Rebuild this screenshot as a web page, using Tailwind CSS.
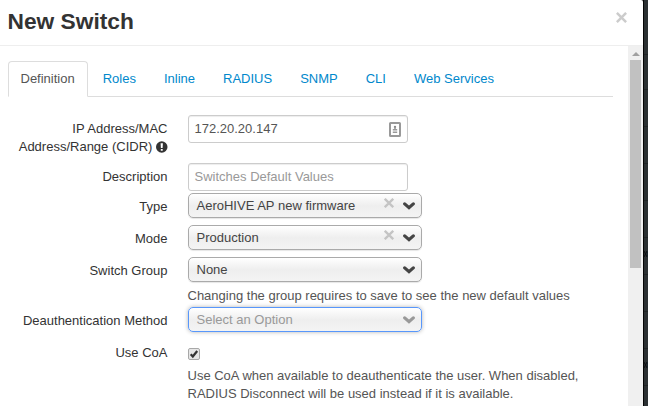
<!DOCTYPE html>
<html lang="en">
<head>
<meta charset="utf-8">
<title>New Switch</title>
<script src="https://cdn.jsdelivr.net/npm/@tailwindcss/browser@4"></script>
</head>
<body class="w-[648px] h-[406px] overflow-hidden flex bg-[#2b3032] font-['Liberation_Sans',Arial,sans-serif] text-[13px] leading-[18px] text-[#333]">
<svg width="0" height="0" class="absolute">
  <symbol id="chev" viewBox="0 0 12 8"><path d="M1.700 1.900 6 5.700l4.300-3.800" fill="none" stroke="currentColor" stroke-width="3.200" stroke-linecap="round"/></symbol>
  <symbol id="cross" viewBox="0 0 10 10"><path d="M.8.8l8.400 8.400M9.200.8.800 9.200" fill="none" stroke="currentColor" stroke-width="2.300"/></symbol>
</svg>
<main class="w-[643px] h-full shrink-0 bg-white rounded-tr-[2px] flex flex-col">
  <header class="h-[46px] shrink-0 border-b border-[#eee] flex justify-between pl-[7.500px] pr-[16px]">
    <h1 class="text-[22.75px] leading-[43px] font-bold">New Switch</h1>
    <svg class="w-[11px] h-[11px] mt-3 text-[#ccc]"><use href="#cross"/></svg>
  </header>
  <div class="flex flex-1 min-h-0">
    <div class="flex-1 pl-[7.500px] pt-[15px] pr-[15px]">
      <nav class="flex gap-[2px] h-9 border-b border-[#ddd] text-[#0088cc] mb-[18px]">
        <a class="h-9 px-3 pt-2 border border-b-white border-[#ddd] rounded-t-[4px] bg-white text-[#555]">Definition</a>
        <a class="px-[13px] pt-[9px]">Roles</a>
        <a class="px-[13px] pt-[9px]">Inline</a>
        <a class="px-[13px] pt-[9px]">RADIUS</a>
        <a class="px-[13px] pt-[9px]">SNMP</a>
        <a class="px-[13px] pt-[9px]">CLI</a>
        <a class="px-[13px] pt-[9px]">Web Services</a>
      </nav>
      <form>
        <div class="h-12 flex gap-5">
          <label class="w-40 pt-[5px] text-right">IP Address/MAC<br>Address/Range (CIDR) <svg class="inline-block align-[-2px] w-[11.500px] h-3" viewBox="0 0 12 12"><circle cx="6" cy="6" r="6" fill="#333"/><path d="M4.800 2h2.400L6.900 7H5.100zM5 8h2v1.900H5z" fill="#fff"/></svg></label>
          <div class="w-[220px] h-7 border border-[#ccc] rounded-[3px] flex items-center justify-between pl-[6px] pr-[6px] text-[#555] shadow-[inset_0_1px_1px_rgba(0,0,0,0.075)]">172.20.20.147
            <svg width="12" height="15" viewBox="0 0 12 15"><rect x="1" y="1" width="10" height="13" rx=".5" fill="#fff" stroke="#999" stroke-width="2"/><circle cx="6" cy="5" r="1.200" fill="#888"/><path d="M5.200 5h1.600v2h1.400v1.500H3.800V7h1.400zM3.800 9.500h4.400v1.500H3.800z" fill="#999"/></svg>
          </div>
        </div>
        <div class="h-[30px] flex gap-5">
          <label class="w-40 pt-[5px] text-right">Description</label>
          <div class="w-[220px] h-7 border border-[#ccc] rounded-[3px] flex items-center pl-[6px] text-[#999] shadow-[inset_0_1px_1px_rgba(0,0,0,0.075)]">Switches Default Values</div>
        </div>
        <div class="h-8 flex gap-5">
          <label class="w-40 pt-[5px] text-right">Type</label>
          <div class="w-[234px] h-[25px] border border-[#aaa] rounded-[5px] flex pl-2 pr-[6px] leading-[23px] text-[#444] bg-linear-to-b from-white from-0% via-[#eee] via-52% to-[#f4f4f4] shadow-[0_1px_1px_rgba(0,0,0,0.1)]"><span class="flex-1">AeroHIVE AP new firmware</span><svg class="w-[10px] h-[10px] mt-1 mr-[9px] text-[#c4c4c4]"><use href="#cross"/></svg><svg class="w-3 h-2 mt-2"><use href="#chev"/></svg></div>
        </div>
        <div class="h-8 flex gap-5">
          <label class="w-40 pt-[5px] text-right">Mode</label>
          <div class="w-[234px] h-[25px] border border-[#aaa] rounded-[5px] flex pl-2 pr-[6px] leading-[23px] text-[#444] bg-linear-to-b from-white from-0% via-[#eee] via-52% to-[#f4f4f4] shadow-[0_1px_1px_rgba(0,0,0,0.1)]"><span class="flex-1">Production</span><svg class="w-[10px] h-[10px] mt-1 mr-[9px] text-[#c4c4c4]"><use href="#cross"/></svg><svg class="w-3 h-2 mt-2"><use href="#chev"/></svg></div>
        </div>
        <div class="h-[50px] flex gap-5">
          <label class="w-40 pt-[5px] text-right">Switch Group</label>
          <div>
            <div class="w-[234px] h-[25px] border border-[#aaa] rounded-[5px] flex pl-2 pr-[6px] leading-[23px] text-[#444] bg-linear-to-b from-white from-0% via-[#eee] via-52% to-[#f4f4f4] shadow-[0_1px_1px_rgba(0,0,0,0.1)]"><span class="flex-1">None</span><svg class="w-3 h-2 mt-2"><use href="#chev"/></svg></div>
            <p class="mt-[5px] text-[#555] whitespace-nowrap">Changing the group requires to save to see the new default values</p>
          </div>
        </div>
        <div class="h-8 flex gap-5">
          <label class="w-40 pt-[5px] text-right">Deauthentication Method</label>
          <div class="w-[234px] h-[25px] border border-[#5897fb] rounded-[5px] flex pl-2 pr-[6px] leading-[23px] text-[#999] bg-linear-to-b from-white from-0% via-[#eee] via-52% to-[#f4f4f4] shadow-[0_0_4px_rgba(0,0,0,0.3)]"><span class="flex-1">Select an Option</span><svg class="w-3 h-2 mt-2"><use href="#chev"/></svg></div>
        </div>
        <div class="flex gap-5">
          <label class="w-40 pt-[5px] text-right shrink-0">Use CoA</label>
          <div class="pt-[9px]">
            <svg class="block" width="12" height="12" viewBox="0 0 12 12"><rect x=".5" y=".5" width="11" height="11" rx="1.500" fill="#e6e6e6" stroke="#a8a8a8"/><path d="M2.700 6.300 4.800 8.500 9.200 3" fill="none" stroke="#333" stroke-width="2.200"/></svg>
            <p class="mt-[7px] text-[#555] whitespace-nowrap">Use CoA when available to deauthenticate the user. When disabled,<br>RADIUS Disconnect will be used instead if it is available.</p>
          </div>
        </div>
      </form>
    </div>
    <div class="w-[15px] bg-[#f0f0f0] flex flex-col items-center">
      <svg class="mt-[6px] mb-1 shrink-0" width="8" height="4" viewBox="0 0 8 4"><path d="M4 0 8 4H0z" fill="#a0a0a0"/></svg>
      <div class="w-[11px] h-[208px] bg-[#c1c1c1]"></div>
    </div>
  </div>
</main>
<aside class="w-[5px] h-full border-l border-[#050505]">
  <svg width="4" height="406" fill="none" stroke="#202425"><path d="M0 54.500h4M0 89.500h4M0 126.500h4M0 163.500h4M0 200.500h4M0 237.500h4M0 274.500h4M0 311.500h4M0 348.500h4M0 385.500h4"/><path d="M0 251l3 6M3 251l-3 6M0 362l3 6M3 362l-3 6" stroke="#0c0e10"/><path d="M4.500 250q-3 4 0 8M4.500 361q-3 4 0 8" stroke="#17232b"/></svg>
</aside>
</body>
</html>
